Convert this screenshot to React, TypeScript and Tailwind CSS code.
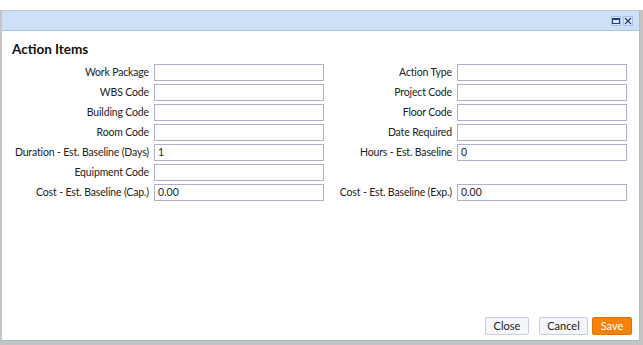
import React from "react";

const font = { fontFamily: "Lato, 'Open Sans', sans-serif" };

function Field({ label, value, lw }: { label: string; value?: string; lw: string }) {
  return (
    <div className="flex items-center h-[17px]">
      <div className={`${lw} text-right pr-[5px] text-[10.5px] tracking-[-0.15px] text-[#222] whitespace-nowrap`}>{label}</div>
      <div className="w-[170px] h-[17px] border border-[#b3aec9] bg-white text-[10.5px] text-[#222] pl-[3px] leading-[15px]">
        {value}
      </div>
    </div>
  );
}

export default function App() {
  const left: [string, string][] = [
    ["Work Package", ""],
    ["WBS Code", ""],
    ["Building Code", ""],
    ["Room Code", ""],
    ["Duration - Est. Baseline (Days)", "1"],
    ["Equipment Code", ""],
    ["Cost - Est. Baseline (Cap.)", "0.00"],
  ];
  const right: ([string, string] | null)[] = [
    ["Action Type", ""],
    ["Project Code", ""],
    ["Floor Code", ""],
    ["Date Required", ""],
    ["Hours - Est. Baseline", "0"],
    null,
    ["Cost - Est. Baseline (Exp.)", "0.00"],
  ];
  return (
    <div className="w-[643px] h-[345px] bg-white pt-[10px]" style={font}>
      <div className="h-[335px] bg-[#c4c4c4] pl-[2px] pr-[3px] pt-[1px] pb-[4px] flex flex-col">
        <div className="flex-1 flex flex-col bg-white border-r border-b border-[#a9bcd6]">
          <div className="h-[20px] bg-[#cde0f8] border-b border-[#a6c3ee] flex items-center justify-end pr-[6px] gap-[2px]">
            <div className="w-[10px] h-[10px] bg-[#dde9fa] border border-[#a8c0e6] flex items-center justify-center">
              <div className="w-[8px] h-[6px] border border-[#1f3f7a] border-t-2"></div>
            </div>
            <div className="w-[10px] h-[10px] bg-[#dde9fa] border border-[#a8c0e6] flex items-center justify-center">
              <svg width="8" height="8" viewBox="0 0 8 8">
                <path d="M1 1L7 7M7 1L1 7" stroke="#1f3f7a" strokeWidth="1.3" />
              </svg>
            </div>
          </div>
          <div className="flex-1 flex flex-col px-[10px]">
            <div className="mt-[9px] text-[13.5px] font-bold text-[#111] leading-[18px]">Action Items</div>
            <div className="mt-[6px] flex">
              <div className="flex flex-col gap-[3px]">
                {left.map(([l, v]) => (
                  <Field key={l} label={l} value={v} lw="w-[142px]" />
                ))}
              </div>
              <div className="flex flex-col gap-[3px]">
                {right.map((r, i) =>
                  r ? (
                    <Field key={r[0]} label={r[0]} value={r[1]} lw="w-[133px]" />
                  ) : (
                    <div key={i} className="h-[17px]"></div>
                  )
                )}
              </div>
            </div>
            <div className="flex-1"></div>
            <div className="flex justify-end items-center gap-[10px] pb-[5px] mr-[-3px]">
              <button className="h-[18px] w-[44px] text-[11px] text-[#222] bg-[#f4f6fa] border border-[#c5cfdf] rounded-[2px]">Close</button>
              <div className="flex gap-[4px]">
                <button className="h-[18px] w-[49px] text-[11px] text-[#222] bg-[#f4f6fa] border border-[#c5cfdf] rounded-[2px]">Cancel</button>
                <button className="h-[18px] w-[40px] text-[11px] text-white bg-[#f5820a] border border-[#e07000] rounded-[2px]">Save</button>
              </div>
            </div>
          </div>
        </div>
      </div>
    </div>
  );
}
